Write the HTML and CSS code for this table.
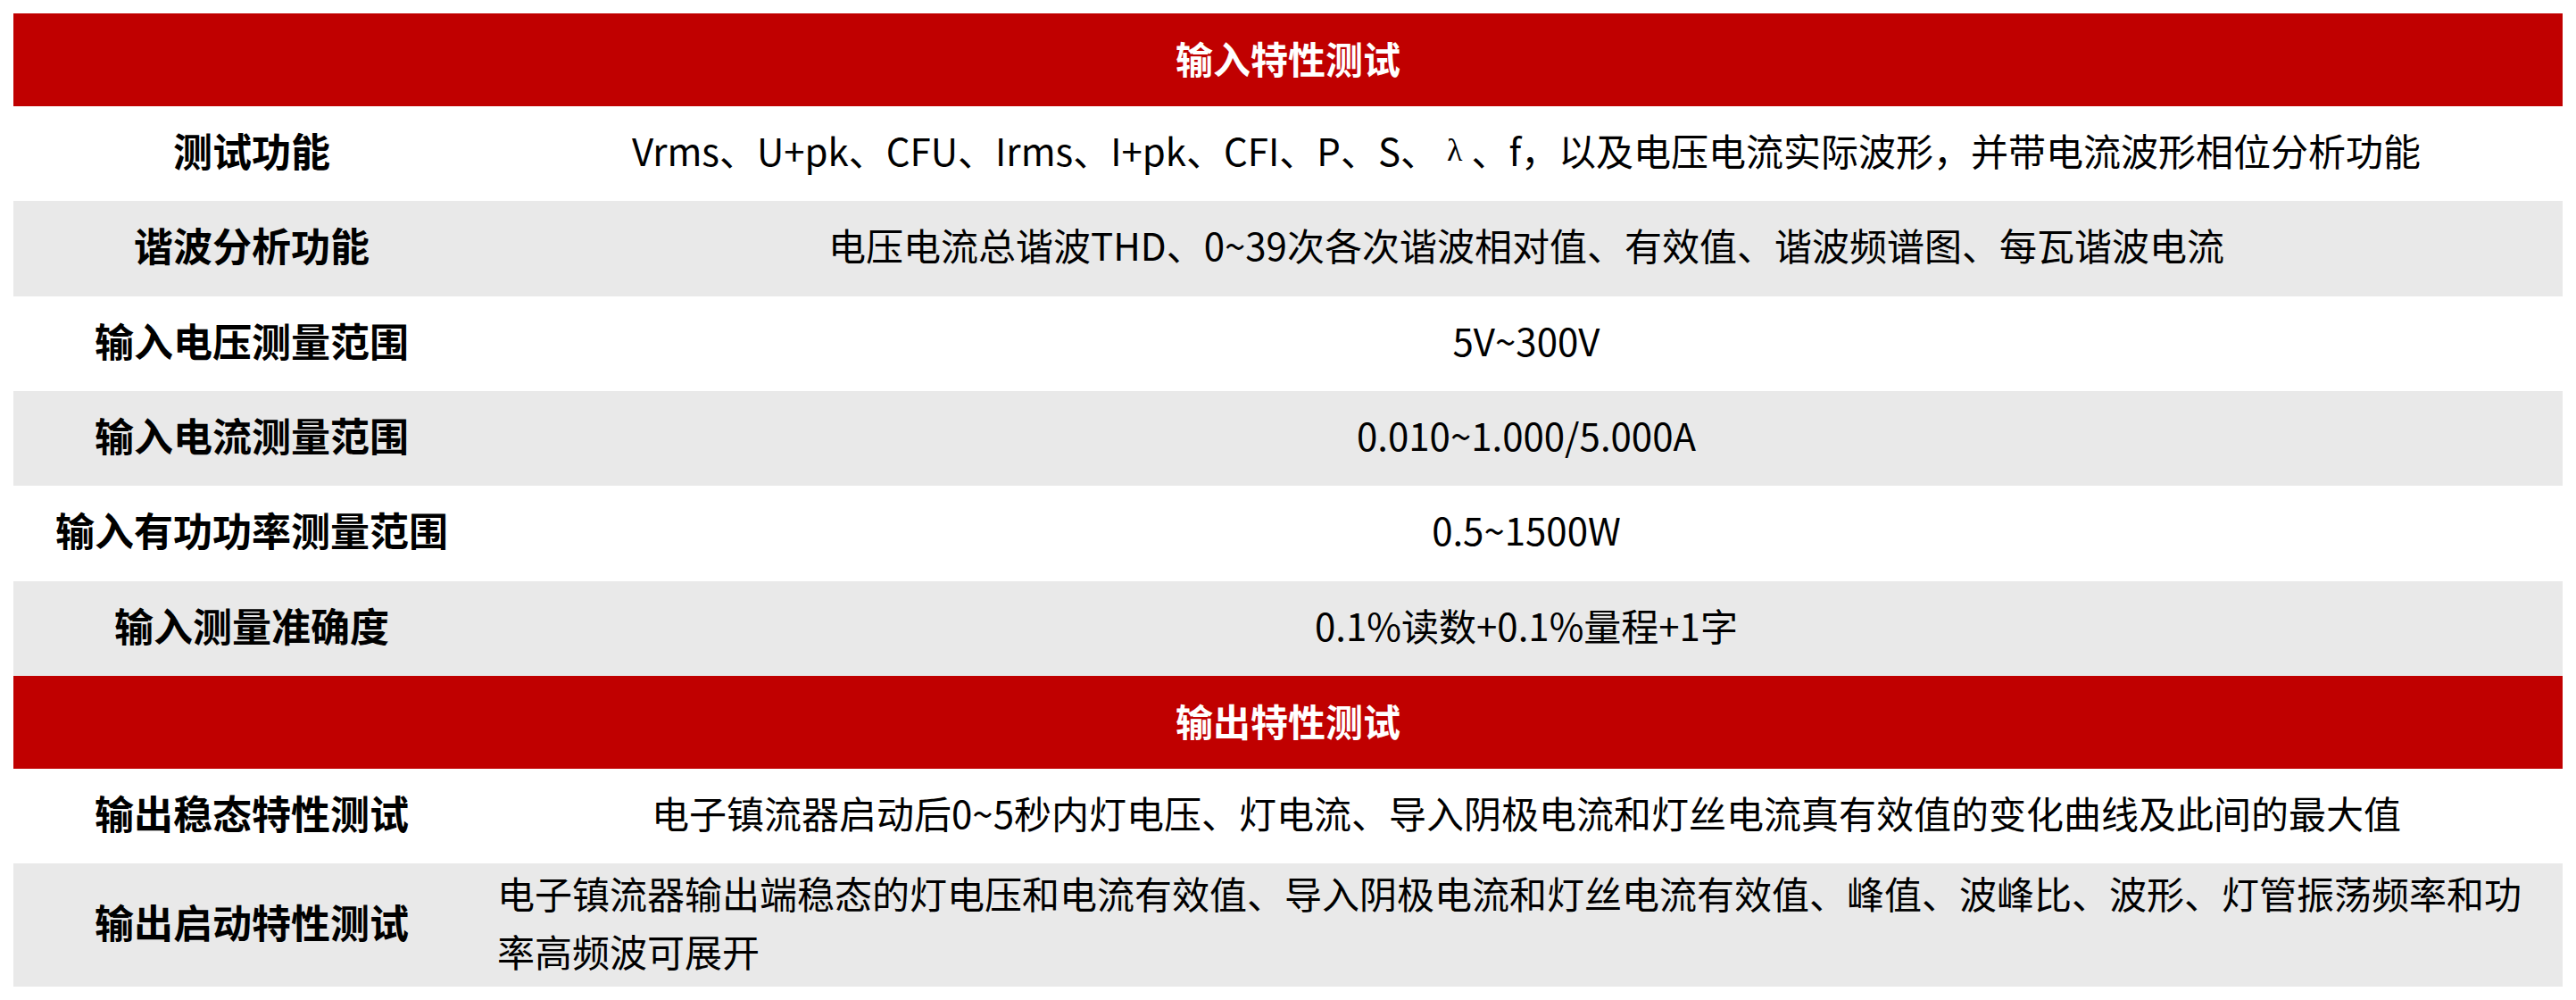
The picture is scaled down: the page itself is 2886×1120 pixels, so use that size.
FILE: index.html
```html
<!DOCTYPE html>
<html lang="zh-CN">
<head>
<meta charset="utf-8">
<title>输入输出特性测试</title>
<link rel="stylesheet" href="styles.css">
</head>
<body>
<div class="spec">
  <div class="head">输入特性测试</div>
  <div class="row">
    <div class="label">测试功能</div>
    <div class="value">Vrms、U+pk、CFU、Irms、I+pk、CFI、P、S、 <span class="greek">λ</span>、f，以及电压电流实际波形，并带电流波形相位分析功能</div>
  </div>
  <div class="row alt">
    <div class="label">谐波分析功能</div>
    <div class="value">电压电流总谐波THD、0~39次各次谐波相对值、有效值、谐波频谱图、每瓦谐波电流</div>
  </div>
  <div class="row">
    <div class="label">输入电压测量范围</div>
    <div class="value">5V~300V</div>
  </div>
  <div class="row alt">
    <div class="label">输入电流测量范围</div>
    <div class="value">0.010~1.000/5.000A</div>
  </div>
  <div class="row">
    <div class="label">输入有功功率测量范围</div>
    <div class="value">0.5~1500W</div>
  </div>
  <div class="row alt">
    <div class="label">输入测量准确度</div>
    <div class="value">0.1%读数+0.1%量程+1字</div>
  </div>
  <div class="head">输出特性测试</div>
  <div class="row">
    <div class="label">输出稳态特性测试</div>
    <div class="value">电子镇流器启动后0~5秒内灯电压、灯电流、导入阴极电流和灯丝电流真有效值的变化曲线及此间的最大值</div>
  </div>
  <div class="row alt tall">
    <div class="label">输出启动特性测试</div>
    <div class="value left">电子镇流器输出端稳态的灯电压和电流有效值、导入阴极电流和灯丝电流有效值、峰值、波峰比、波形、灯管振荡频率和功率高频波可展开</div>
  </div>
</div>
</body>
</html>
```

FILE: styles.css
```css
html, body {
  margin: 0;
  padding: 0;
  background: #ffffff;
}

body {
  font-family: "Noto Sans CJK SC", "Noto Sans", sans-serif;
  color: #000000;
  font-size: 42px;
}

.spec {
  display: flex;
  flex-direction: column;
  margin: 15px;
  width: 2856px;
}

.head {
  box-sizing: border-box;
  height: 104px;
  padding-bottom: 4px;
  display: flex;
  align-items: center;
  justify-content: center;
  background: #c00000;
  color: #ffffff;
  font-weight: 700;
  line-height: 64px;
}

.row {
  display: flex;
  height: 106.33px;
  background: #ffffff;
}

.row.alt {
  background: #e9e9e9;
}

.row.tall {
  height: 138px;
}

.label {
  box-sizing: border-box;
  width: 534px;
  flex: none;
  display: flex;
  align-items: center;
  justify-content: center;
  font-size: 44px;
  font-weight: 700;
  line-height: 64px;
  text-align: center;
  padding-bottom: 8px;
}

.value {
  box-sizing: border-box;
  flex: 1;
  display: flex;
  align-items: center;
  justify-content: center;
  text-align: center;
  line-height: 64px;
  padding: 0 8px 8px;
}

.value.left {
  justify-content: flex-start;
  text-align: left;
  line-height: 65px;
}

.greek {
  font-family: "Liberation Serif", serif;
  font-size: 36px;
  padding: 0 10px;
}
```
